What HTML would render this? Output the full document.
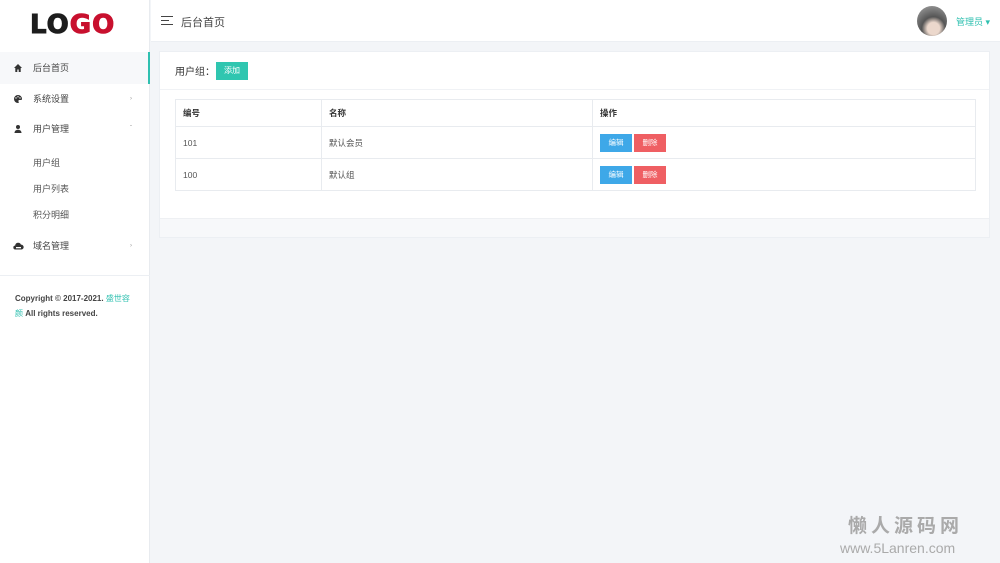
<!DOCTYPE html>
<html><head><meta charset="utf-8"><style>
*{margin:0;padding:0;box-sizing:border-box}
body{width:1000px;height:563px;overflow:hidden;background:#f3f5f8;font-family:"Liberation Sans","Noto Sans CJK SC",sans-serif;color:#333;position:relative}
.side{position:absolute;left:0;top:0;width:150px;height:563px;background:#fff;border-right:1px solid #e8ebef}
.logo{position:absolute;left:30px;top:10px;font-size:26px;font-weight:bold;letter-spacing:1px;font-family:"DejaVu Sans","Liberation Sans",sans-serif;-webkit-text-stroke:1px currentColor}
.nav{position:absolute;left:0;width:150px;height:30px;font-size:9px;color:#444;line-height:30px}
.nav .t{position:absolute;left:33px}
.nav svg{position:absolute;left:13px;top:10px}
.nav .a{position:absolute;right:18px;font-size:6px;color:#999}
.sub{position:absolute;left:33px;font-size:9px;color:#555}
.head{position:absolute;left:151px;top:0;right:0;height:42px;background:#fff;border-bottom:1px solid #eceff3}
.card{position:absolute;left:159px;top:51px;width:831px;height:187px;background:#fff;border:1px solid #eceff3}
table{position:absolute;left:15px;top:47px;width:801px;border-collapse:collapse;font-size:8.5px}
td{border:1px solid #e8ebef;padding:0 7px;height:32px;vertical-align:middle;color:#555}
tr:first-child td{height:27px;color:#333;font-weight:bold}
.b{display:inline-block;width:32px;height:18px;line-height:18px;text-align:center;color:#fff;font-size:7.5px;margin-right:2px;vertical-align:middle}
</style></head><body>
<div class="side">
<div class="logo"><span style="color:#1d1d1d">LO</span><span style="color:#c8102e">GO</span></div>
<div style="position:absolute;top:52px;left:0;width:150px;height:32px;background:#f7f8fa;border-right:2px solid #2fc0b0"></div>
<div class="nav" style="top:53px"><svg width="10" height="10" viewBox="0 0 10 10"><path d="M5 1L1 5h1.3v4h2V6.5h1.4V9h2V5H9z" fill="#333"/></svg><span class="t">后台首页</span></div>
<div class="nav" style="top:84px"><svg width="10" height="10" viewBox="0 0 10 10"><path d="M5 1a4 4 0 0 0 0 8c1 0 1-1 .5-1.5S5.6 6 6.5 6H8a1 1 0 0 0 1-1A4 4 0 0 0 5 1z" fill="#333"/><circle cx="3" cy="4" r=".7" fill="#fff"/><circle cx="5" cy="2.8" r=".7" fill="#fff"/><circle cx="7" cy="4" r=".7" fill="#fff"/></svg><span class="t">系统设置</span><span class="a">›</span></div>
<div class="nav" style="top:114px"><svg width="10" height="10" viewBox="0 0 10 10"><circle cx="5" cy="3" r="2" fill="#333"/><path d="M1.5 9c0-2.3 1.6-3.3 3.5-3.3S8.5 6.7 8.5 9z" fill="#333"/></svg><span class="t">用户管理</span><span class="a">ˇ</span></div>
<div class="sub" style="top:156px">用户组</div>
<div class="sub" style="top:182px">用户列表</div>
<div class="sub" style="top:208px">积分明细</div>
<div class="nav" style="top:231px"><svg width="11" height="10" viewBox="0 0 11 10"><path d="M2.5 8.5a2 2 0 0 1-.3-4A3 3 0 0 1 8 3.7a2.4 2.4 0 0 1 .5 4.8z" fill="#333"/><rect x="3" y="6" width="5" height="1.3" fill="#fff"/></svg><span class="t">域名管理</span><span class="a">›</span></div>
<div style="position:absolute;top:275px;left:0;width:150px;border-top:1px solid #eceff3"></div>
<div style="position:absolute;top:291px;left:15px;width:118px;font-size:8px;line-height:15px;color:#444;font-weight:600">Copyright © 2017-2021. <span style="color:#2fc0b0;font-weight:normal">盛世容颜</span> All rights reserved.</div>
</div>
<div class="head">
<div style="position:absolute;left:10px;top:16px;width:12px;height:9px;border-top:1.5px solid #444;border-bottom:1.5px solid #444"><div style="margin-top:2.5px;width:8px;border-top:1.5px solid #444"></div></div>
<div style="position:absolute;left:30px;top:14px;font-size:11px;color:#444">后台首页</div>
<div style="position:absolute;left:766px;top:6px;width:30px;height:30px;border-radius:50%;background:radial-gradient(circle at 55% 75%,#ecd8cc 0 22%,#555 42%,#777 65%,#aaa)"></div>
<div style="position:absolute;left:805px;top:15px;font-size:9px;color:#2fc0b0">管理员 ▾</div>
</div>
<div class="card">
<div style="position:absolute;left:0;top:0;right:0;height:38px;border-bottom:1px solid #f0f2f5"></div>
<div style="position:absolute;left:15px;top:11px;font-size:10px;color:#333">用户组：</div>
<div style="position:absolute;left:56px;top:10px;width:32px;height:18px;background:#2fc6b0;color:#fff;font-size:8px;line-height:18px;text-align:center">添加</div>
<table>
<tr><td style="width:146px">编号</td><td style="width:271px">名称</td><td>操作</td></tr>
<tr><td>101</td><td>默认会员</td><td><span class="b" style="background:#3ea8e8">编辑</span><span class="b" style="background:#ef5f63">删除</span></td></tr>
<tr><td>100</td><td>默认组</td><td><span class="b" style="background:#3ea8e8">编辑</span><span class="b" style="background:#ef5f63">删除</span></td></tr>
</table>
<div style="position:absolute;left:0;right:0;bottom:0;height:19px;background:#f7f8fa;border-top:1px solid #eef0f3"></div>
</div>
<div style="position:absolute;left:848px;top:511px;font-size:19px;font-weight:bold;color:#aaa;letter-spacing:4px">懒人源码网</div>
<div style="position:absolute;left:840px;top:540px;font-size:14px;color:#aaa">www.5Lanren.com</div>
</body></html>
